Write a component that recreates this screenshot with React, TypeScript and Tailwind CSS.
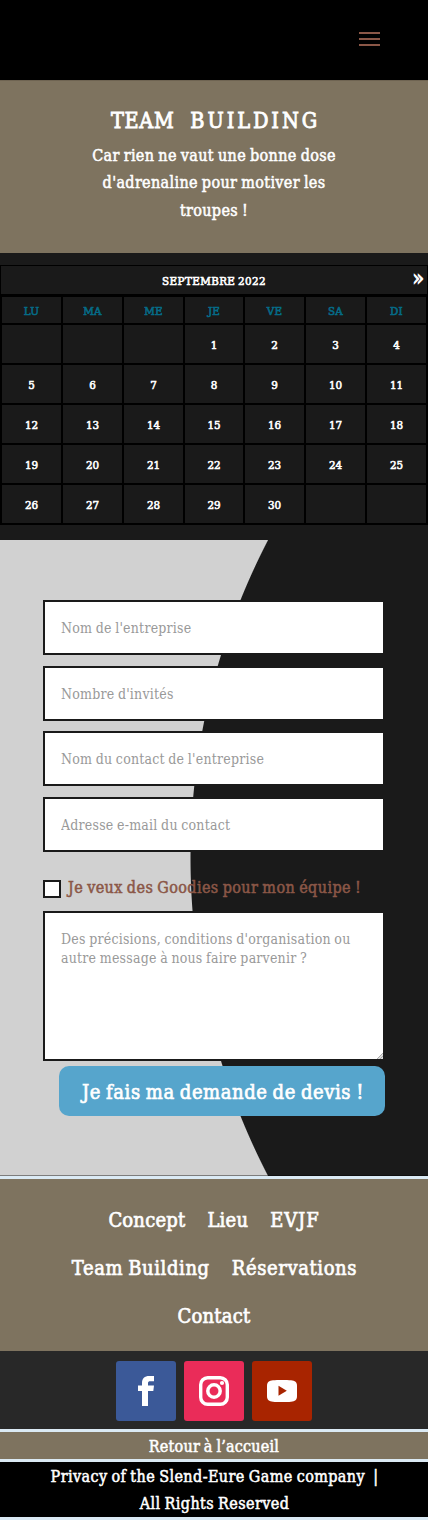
import React from "react";

const DAYS = ["LU", "MA", "ME", "JE", "VE", "SA", "DI"];
const LEADING_BLANKS = 3;
const CELLS = Array.from({ length: 35 }, (_, i) => {
  const day = i - LEADING_BLANKS + 1;
  return day >= 1 && day <= 30 ? String(day) : "";
});

const medium = "[-webkit-text-stroke:0.5px_currentColor]";
const body = "text-[16px] tracking-[0.34px] [word-spacing:-0.9px]";
const field =
  "block w-full rounded-none border-2 border-[#1a1a1a] bg-white px-4 text-[14px] text-[#666] outline-none placeholder:text-[#999] placeholder:opacity-100 [word-spacing:-0.7px] tracking-[0.22px]";

function Header() {
  return (
    <header className="flex h-20 justify-end bg-black pr-12 pt-8">
      <button aria-label="Menu" className="flex h-[14px] w-[21px] flex-col justify-between">
        <span className="h-[2px] w-full bg-[#8b5747]" />
        <span className="h-[2px] w-full bg-[#8b5747]" />
        <span className="h-[2px] w-full bg-[#8b5747]" />
      </button>
    </header>
  );
}

function Hero() {
  return (
    <section className="h-[173px] border-t border-[#6f6452] bg-[#7e735f] pt-[26px] text-center text-white">
      <h1 className="h-[35px] whitespace-nowrap pl-[3px] text-[21.5px] leading-[28px] [-webkit-text-stroke:0.8px_currentColor]">
        <span className="tracking-[0.7px] [word-spacing:9px]">TEAM </span>
        <span className="tracking-[2.9px]">BUILDING</span>
      </h1>
      <p className={`leading-[27.3px] ${body} ${medium}`}>
        Car rien ne vaut une bonne dose
        <br />
        d'adrenaline pour motiver les
        <br />
        troupes !
      </p>
    </section>
  );
}

function Calendar() {
  return (
    <section className="bg-[#1a1a1a] pb-[15px] pt-3 text-[11.5px] text-white">
      <div className="bg-black">
        <div className="px-px pt-px">
          <div className="grid h-7 grid-cols-[1fr_auto_1fr] items-center bg-[#1a1a1a]">
            <span />
            <span className="pt-[3px] tracking-[0.4px] [word-spacing:-1px] [-webkit-text-stroke:0.6px_currentColor]">SEPTEMBRE 2022</span>
            <span className="pb-[4px] pr-[3px] text-right text-[21px] leading-[20px] [-webkit-text-stroke:0.9px_currentColor]">»</span>
          </div>
        </div>
        <div className="grid grid-cols-[59px_59px_59px_58px_59px_59px_59px] gap-[2px] px-[2px] pb-[2px] pt-[3px] [-webkit-text-stroke:0.6px_currentColor]">
          {DAYS.map((d) => (
            <div key={d} className="flex h-[26px] items-center justify-center bg-[#1a1a1a] pt-[3px] tracking-[0.2px] text-[#056b87]">
              {d}
            </div>
          ))}
          {CELLS.map((d, i) => (
            <div key={i} className="flex h-[38px] items-center justify-center bg-[#1a1a1a] pt-[3px] tracking-[-0.2px]">
              {d}
            </div>
          ))}
        </div>
      </div>
    </section>
  );
}

function QuoteForm() {
  return (
    <section className="h-[636px] border-b border-[#000]/40 bg-[radial-gradient(circle_at_881px_318px,#1a1a1a_690px,#d1d1d1_691px)] bg-origin-border pl-[43px] pr-[43px] pt-[60px]">
      <form className="flex flex-col">
        <input className={`${field} mb-[11px] h-[55px]`} placeholder="Nom de l'entreprise" />
        <input className={`${field} mb-[10px] h-[55px]`} placeholder="Nombre d'invités" />
        <input className={`${field} mb-[11px] h-[55px]`} placeholder="Nom du contact de l'entreprise" />
        <input className={`${field} h-[55px]`} placeholder="Adresse e-mail du contact" />
        <label className="mt-[22px] flex h-[27px] items-center gap-[6px]">
          <span className="mt-[3px] h-[18px] w-[18px] shrink-0 border-2 border-[#1a1a1a] bg-white" />
          <span className={`whitespace-nowrap pl-px text-[16px] tracking-[0.4px] text-[#8b5747] [word-spacing:-0.9px] ${medium}`}>
            Je veux des Goodies pour mon équipe !
          </span>
        </label>
        <div className="relative mt-[10px]">
          <textarea
            className={`${field} h-[150px] resize-none pt-[17px] leading-[19px]`}
            placeholder="Des précisions, conditions d'organisation ou autre message à nous faire parvenir ?"
          />
          <svg className="absolute bottom-[2px] right-[2px]" width="6" height="6" viewBox="0 0 6 6">
            <path d="M0 6 6 0v6z" fill="#dcdcdc" />
            <path d="M0 6 6 0M3 6 6 3" stroke="#999" strokeWidth="0.8" />
          </svg>
        </div>
        <button
          type="button"
          className="mt-[5px] h-[50px] w-[326px] self-end whitespace-nowrap rounded-[10px] bg-[#56a5cc] pl-[2px] pt-px text-[20px] tracking-[0.57px] text-white [word-spacing:-1.2px] [-webkit-text-stroke:0.65px_currentColor]"
        >
          Je fais ma demande de devis !
        </button>
      </form>
    </section>
  );
}

function FooterNav() {
  return (
    <nav className="h-[175px] border-t-[3px] border-[#dbeaf4] bg-[#7e735f] pt-[17px] text-[20px] leading-[48px] text-white [-webkit-text-stroke:0.65px_currentColor]">
      <div className="flex justify-center gap-[22px]">
        <a className="tracking-[0.2px]">Concept</a>
        <a className="tracking-[0.2px]">Lieu</a>
        <a className="tracking-[0.9px]">EVJF</a>
      </div>
      <div className="flex justify-center gap-[22px] pl-px tracking-[0.6px] [word-spacing:-1.2px]">
        <a>Team Building</a>
        <a>Réservations</a>
      </div>
      <div className="flex justify-center tracking-[0.2px]">
        <a>Contact</a>
      </div>
    </nav>
  );
}

function Social() {
  return (
    <div className="flex h-[78px] justify-center gap-2 bg-[#282828] pt-[10px]">
      <a aria-label="Facebook" className="flex h-[60px] w-[60px] items-center justify-center rounded-[3px] bg-[#3b5998]">
        <svg width="30" height="30" viewBox="0 0 30 30" fill="#fff">
          <path d="M23 0v5.200h-3.800C17.700 5.200 17 5.800 17 7.200V9.500h6l-.7 5.500H17v15h-6V15H7V9.500h4V7C11 2.300 13.600 0 18.200 0z" />
        </svg>
      </a>
      <a aria-label="Instagram" className="flex h-[60px] w-[60px] items-center justify-center rounded-[3px] bg-[#ea2c59]">
        <svg width="30" height="30" viewBox="0 0 30 30" fill="none" stroke="#fff">
          <rect x="1.700" y="1.700" width="26.600" height="26.600" rx="7" strokeWidth="3.400" />
          <circle cx="15" cy="15" r="6.200" strokeWidth="3.500" />
          <circle cx="23" cy="7" r="2.100" fill="#fff" stroke="none" />
        </svg>
      </a>
      <a aria-label="YouTube" className="flex h-[60px] w-[60px] items-center justify-center rounded-[3px] bg-[#a82400]">
        <svg width="30" height="30" viewBox="0 0 30 30">
          <path fill="#fff" d="M6 4.300C10 3.900 20 3.900 24 4.300c4 .3 6 1.700 6 5.700v10c0 4-2 5.400-6 5.700-4 .4-14 .4-18 0C2 25.400 0 24 0 20V10c0-4 2-5.400 6-5.700z" />
          <path fill="#a82400" d="M11.500 9.800v10l8.300-5z" />
        </svg>
      </a>
    </div>
  );
}

export default function App() {
  return (
    <div className="w-full overflow-hidden bg-black font-['DejaVu_Serif_Condensed','DejaVu_Serif',serif] [font-stretch:condensed]">
      <Header />
      <Hero />
      <Calendar />
      <QuoteForm />
      <FooterNav />
      <Social />
      <div className={`h-[33px] border-y-[3px] border-[#dbeaf4] bg-[#7e735f] pt-px text-center text-[16px] leading-[27px] tracking-[0.2px] text-white [word-spacing:-0.9px] ${medium}`}>
        Retour à l’accueil
      </div>
      <footer className={`h-[58px] whitespace-nowrap border-b-[3px] border-[#dbeaf4] pl-px pt-px text-center text-[16px] leading-[27px] tracking-[0.4px] text-white [word-spacing:-0.9px] ${medium}`}>
        Privacy of the Slend-Eure Game company &nbsp;|
        <br />
        All Rights Reserved
      </footer>
    </div>
  );
}
